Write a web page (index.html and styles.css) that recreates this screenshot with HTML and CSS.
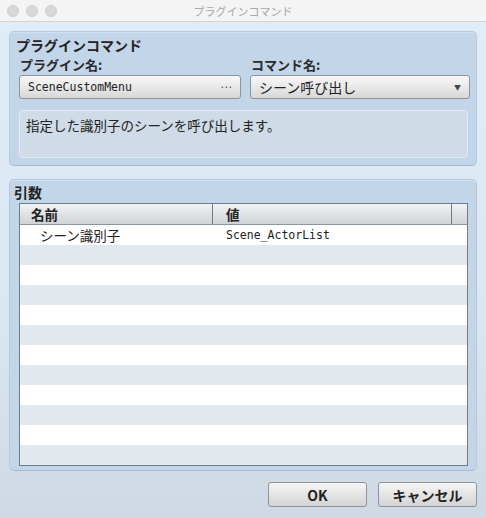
FILE: index.html
```html
<!DOCTYPE html>
<html lang="ja">
<head>
    <meta charset="UTF-8" />
    <title>プラグインコマンド</title>
    <link rel="stylesheet" href="styles.css">
</head>
<body>
    <div class="window">
        <header class="titlebar">
            <div class="lights">
                <span></span><span></span><span></span>
            </div>
            <div class="caption">プラグインコマンド</div>
        </header>
        <main class="content">
            <section class="group command">
                <h2>プラグインコマンド</h2>
                <div class="fields">
                    <div class="field">
                        <label>プラグイン名:</label>
                        <button class="picker mono"><span>SceneCustomMenu</span><span class="dots">⋯</span></button>
                    </div>
                    <div class="field">
                        <label>コマンド名:</label>
                        <button class="picker"><span>シーン呼び出し</span><span class="arrow">▼</span></button>
                    </div>
                </div>
                <div class="help">指定した識別子のシーンを呼び出します。</div>
            </section>
            <section class="group args">
                <h2>引数</h2>
                <div class="table">
                    <div class="thead">
                        <div class="th name">名前</div>
                        <div class="th value">値</div>
                        <div class="th rest"></div>
                    </div>
                    <div class="tbody">
                        <div class="row"><div class="td name">シーン識別子</div><div class="td value mono">Scene_ActorList</div></div>
                        <div class="row"></div>
                        <div class="row"></div>
                        <div class="row"></div>
                        <div class="row"></div>
                        <div class="row"></div>
                        <div class="row"></div>
                        <div class="row"></div>
                        <div class="row"></div>
                        <div class="row"></div>
                        <div class="row"></div>
                        <div class="row"></div>
                    </div>
                </div>
            </section>
            <div class="actions">
                <button class="btn">OK</button>
                <button class="btn">キャンセル</button>
            </div>
        </main>
    </div>
</body>
</html>
```

FILE: styles.css
```css
body {
    margin: 0;
    font-family: "Noto Sans CJK JP", "Noto Sans", sans-serif;
    color: #222;
    background-color: #dde9f5;
}

.window {
    width: 486px;
    height: 518px;
    display: flex;
    flex-direction: column;
    overflow: hidden;
}

/* Заголовок окна */
.titlebar {
    height: 21px;
    flex: none;
    display: flex;
    align-items: center;
    position: relative;
    background-color: #f4f4f4;
    border-bottom: 1px solid #d4d4d4;
}

.lights {
    display: flex;
    gap: 7px;
    padding-left: 7px;
}

.lights span {
    width: 12px;
    height: 12px;
    border-radius: 50%;
    background-color: #d7d7d7;
    border: 1px solid #cfcfcf;
    box-sizing: border-box;
}

.caption {
    position: absolute;
    left: 0;
    right: 0;
    text-align: center;
    font-size: 11px;
    color: #a8a8a8;
    pointer-events: none;
}

.content {
    flex: 1;
    display: flex;
    flex-direction: column;
    padding: 9px 9px 0 9px;
    background: linear-gradient(#e0ecf8, #dae6f2 60%, #cfd9e3);
}

.group {
    background-color: #c3d5e9;
    border: 1px solid #b6c8dc;
    border-bottom-color: #a9b8cc;
    border-radius: 5px;
    box-shadow: inset 0 1px 0 #d3e1ef;
}

.group h2 {
    margin: 0;
    font-size: 14px;
    font-weight: bold;
    line-height: 16px;
}

.command {
    height: 135px;
    box-sizing: border-box;
    padding: 5px 8px 0 9px;
}

.command h2 {
    margin-left: -3px;
}

.fields {
    display: grid;
    grid-template-columns: 222px 220px;
    gap: 9px;
    margin-top: 4px;
}

.field label {
    display: block;
    font-size: 13px;
    font-weight: bold;
    line-height: 16px;
    padding-left: 1px;
    color: #2a2a2a;
}

.picker {
    width: 100%;
    height: 24px;
    margin-top: 2px;
    display: flex;
    align-items: center;
    justify-content: space-between;
    padding: 0 8px 0 8px;
    font-family: "Noto Sans CJK JP", sans-serif;
    font-size: 14px;
    color: #222;
    background: linear-gradient(#f8f8f8, #e9e9e9 50%, #d7d7d7);
    border: 1px solid #8d939a;
    border-radius: 3px;
}

.picker.mono span:first-child {
    font-family: "DejaVu Sans Mono", monospace;
    font-size: 11.5px;
}

.dots {
    font-family: "DejaVu Sans", sans-serif;
    font-size: 12px;
    color: #555;
}

.arrow {
    font-size: 7px;
    color: #444;
}

.help {
    margin-top: 11px;
    height: 48px;
    box-sizing: border-box;
    padding: 6px 6px;
    font-size: 13.5px;
    line-height: 17px;
    background-color: #cfdbe6;
    border: 1px solid #e2eaf2;
    border-radius: 4px;
}

.args {
    margin-top: 13px;
    height: 292px;
    box-sizing: border-box;
    padding: 4px 8px 0 9px;
}

.args h2 {
    margin-left: -5px;
}

.table {
    margin-top: 3px;
    height: 263px;
    box-sizing: border-box;
    border: 1px solid #6f7b86;
    background-color: #fff;
    display: flex;
    flex-direction: column;
}

.thead {
    display: flex;
    height: 20px;
    flex: none;
    background: linear-gradient(#f1f2f3, #dcdfe2 60%, #cfd3d7);
    border-bottom: 1px solid #8b959e;
}

.th {
    font-size: 13.5px;
    font-weight: bold;
    line-height: 20px;
    box-sizing: border-box;
}

.th.name {
    width: 193px;
    padding-left: 11px;
    border-right: 1px solid #6f7b86;
}

.th.value {
    width: 239px;
    padding-left: 13px;
    border-right: 1px solid #6f7b86;
}

.th.rest {
    flex: 1;
}

.row {
    height: 20px;
    display: flex;
    font-size: 13.5px;
    line-height: 20px;
}

.row:nth-child(even) {
    background-color: #e3e8ee;
}

.td.name {
    width: 193px;
    padding-left: 20px;
    box-sizing: border-box;
}

.td.value {
    padding-left: 13px;
}

.mono {
    font-family: "DejaVu Sans Mono", monospace;
}

.td.mono {
    font-size: 11.5px;
}

.actions {
    display: flex;
    justify-content: flex-end;
    gap: 11px;
    margin-top: 11px;
}

.btn {
    width: 99px;
    height: 25px;
    font-family: "Noto Sans CJK JP", sans-serif;
    font-size: 14px;
    font-weight: bold;
    color: #222;
    background: linear-gradient(#f6f6f6, #e4e4e4 50%, #d3d3d3);
    border: 1px solid #8d939a;
    border-radius: 3px;
}
```
